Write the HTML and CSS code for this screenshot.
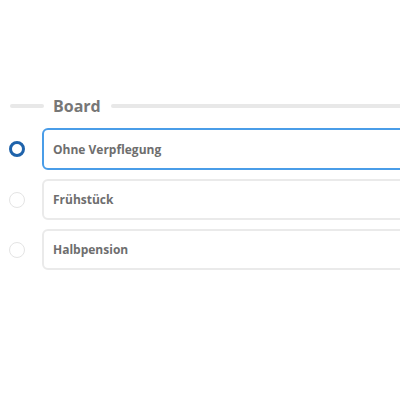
FILE: index.html
```html
<!DOCTYPE html>
<html>
<head>
<meta charset="utf-8">
<link rel="stylesheet" href="styles.css">
</head>
<body>
<div class="page">
  <div class="legend">
    <span class="line short"></span>
    <span class="legend-text">Board</span>
    <span class="line long"></span>
  </div>
  <div class="options">
    <div class="option">
      <span class="radio checked"></span>
      <div class="box selected">Ohne Verpflegung</div>
    </div>
    <div class="option">
      <span class="radio"></span>
      <div class="box">Frühstück</div>
    </div>
    <div class="option">
      <span class="radio"></span>
      <div class="box">Halbpension</div>
    </div>
  </div>
</div>
</body>
</html>
```
FILE: styles.css
```css
html, body {
  margin: 0;
  padding: 0;
  background: #fff;
  overflow: hidden;
}
.page {
  width: 400px;
  height: 400px;
  overflow: hidden;
  padding-top: 95px;
  box-sizing: border-box;
  font-family: "Open Sans", "Liberation Sans", sans-serif;
}
.legend {
  display: flex;
  align-items: center;
  height: 22px;
  padding-left: 10px;
}
.line {
  height: 4px;
  background: #e8e8e8;
  border-radius: 2px;
}
.line.short { width: 34px; flex: none; }
.line.long { flex: 1; margin-right: -20px; }
.legend-text {
  font-size: 16px;
  font-weight: 700;
  color: #777;
  margin: 0 10px 0 9px;
  line-height: 22px;
}
.options {
  margin-top: 11px;
  display: flex;
  flex-direction: column;
  gap: 9px;
}
.option {
  display: flex;
  align-items: center;
}
.radio {
  flex: none;
  width: 16px;
  height: 16px;
  box-sizing: border-box;
  border-radius: 50%;
  border: 1px solid #e4e4e4;
  margin-left: 9px;
  margin-right: 17px;
}
.radio.checked {
  border: 3px solid #1f63ab;
}
.box {
  flex: none;
  width: 380px;
  height: 41px;
  box-sizing: border-box;
  border: 2px solid #eaeaea;
  border-radius: 6px;
  display: flex;
  align-items: center;
  padding-left: 9px;
  font-size: 12px;
  font-weight: 700;
  color: #6e6e6e;
}
.box.selected {
  height: 42px;
  border-color: #4a9de8;
}
```
